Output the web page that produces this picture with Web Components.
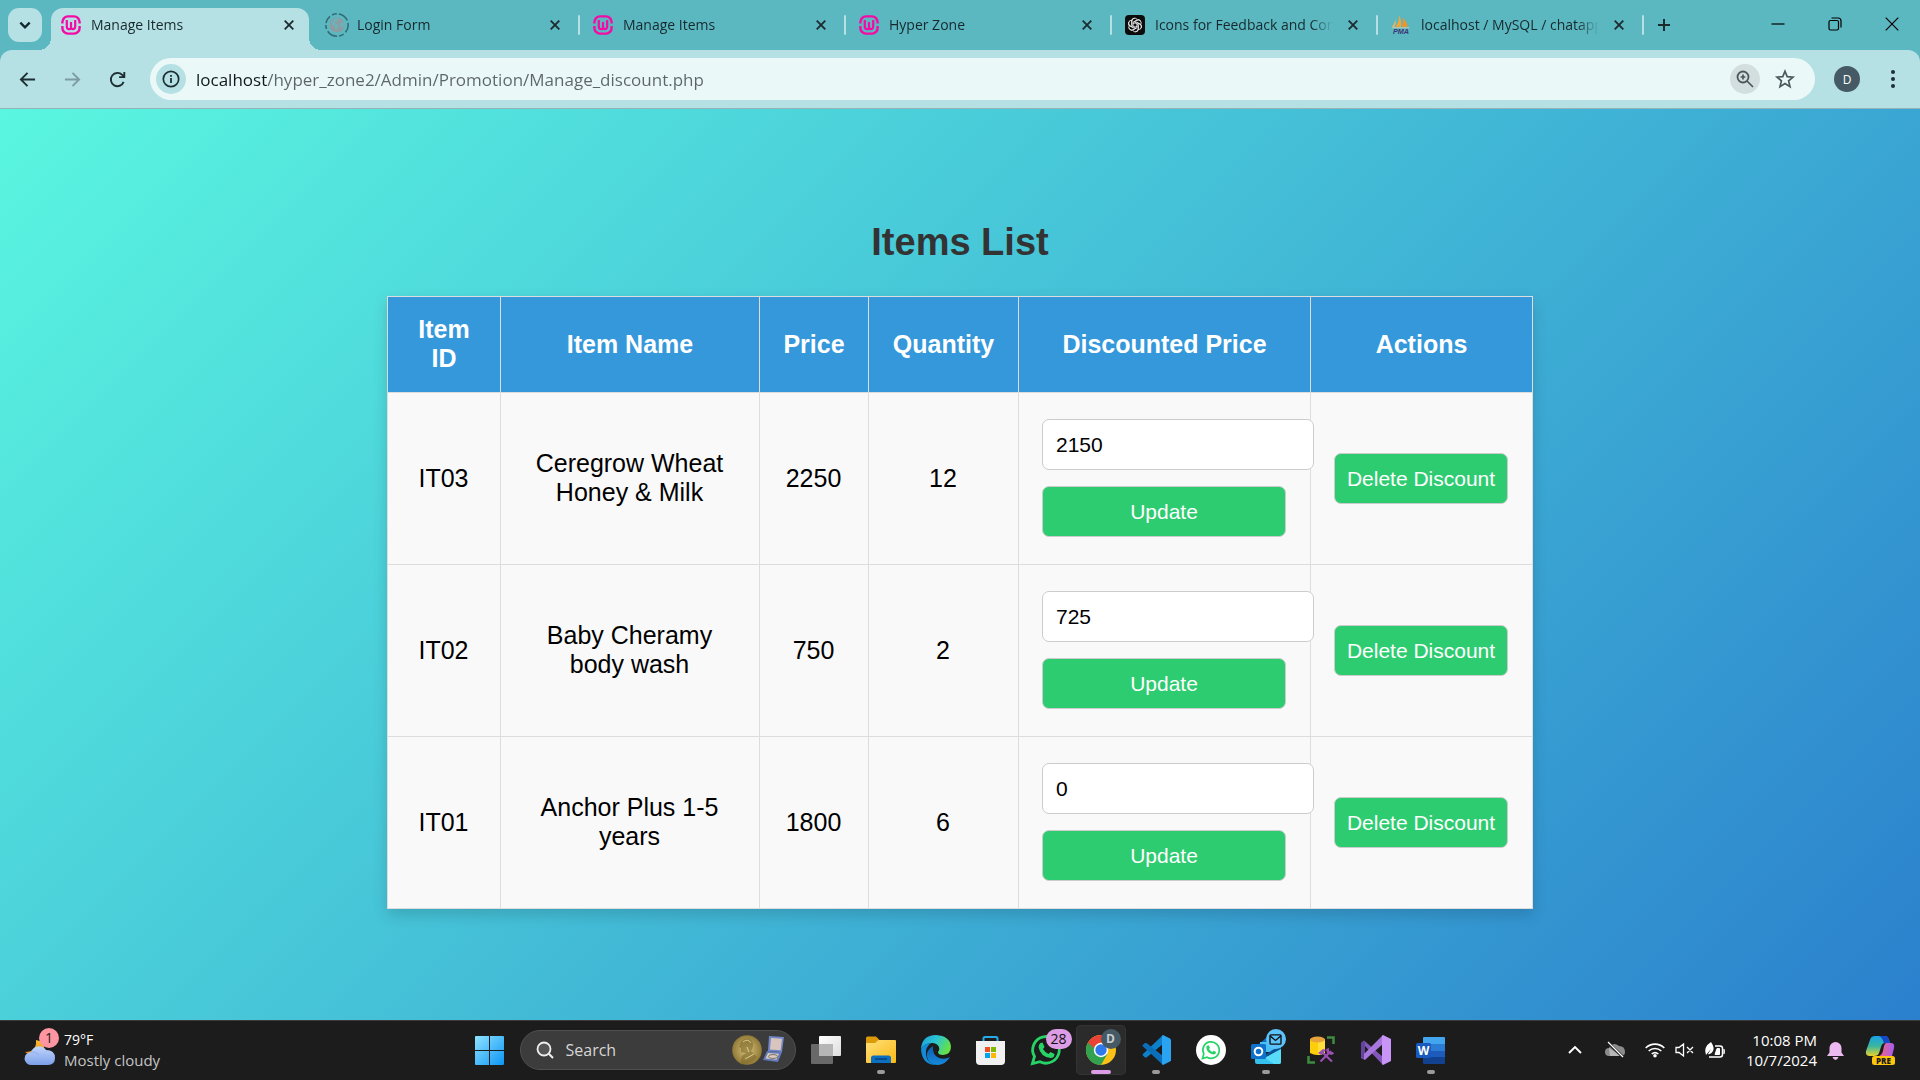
<!DOCTYPE html>
<html lang="en">
<head>
<meta charset="utf-8">
<title>Manage Items</title>
<style>
  body { margin: 0; min-height: 100vh; display: flex; flex-direction: column; font-family: "Open Sans", "Segoe UI", sans-serif; font-size: 14px; }
  manage-page { flex: 1; }
</style>
</head>
<body>
<browser-chrome></browser-chrome>
<manage-page></manage-page>
<task-bar></task-bar>

<script>
const ICONS = {
  wamp: ['0 0 20 20', `<g fill="none" stroke="#f50aa5" stroke-width="2.4"><path d="M1.4 8.6V7a5.6 5.6 0 0 1 5.6-5.6h6A5.6 5.6 0 0 1 18.600 7v1.600M1.400 11v2A5.600 5.600 0 0 0 7 18.600h6a5.600 5.600 0 0 0 5.600-5.600v-2"/><path d="M5.800 5v6.500q0 2.700 2.200 2.700t2-2.200V7v5q0 2.200 2 2.200t2.200-2.700V5" stroke-width="2.200"/></g>`],
  globe: ['0 0 24 24', `<circle cx="12" cy="12" r="11.200" fill="none" stroke="#346c76" stroke-width="1.600" stroke-dasharray="8 2.400 5 2 11 2.500 4 2"/><circle cx="12" cy="12" r="7.600" fill="#8b9da3"/><path d="M7 8q3-4 7-2l-1 2-3 1 1 2 3 1-1 3-2 2-2-4-3-2zM16 9l3 1v3l-2 2-2-3z" fill="#6fafb8"/>`],
  openai: ['0 0 20 20', `<rect width="20" height="20" rx="4" fill="#0c0c0d"/><g fill="none" stroke="#e8e8e8" stroke-width=".9">${[0,60,120,180,240,300].map(a=>`<path transform="rotate(${a} 10 10)" d="M6.800 9.800V6a2.900 2.900 0 0 1 5.400-1.400M8 11V7.400l3.600-2.100a2.900 2.900 0 0 1 4 1"/>`).join('')}</g>`],
  pma: ['0 0 22 22', `<path d="M9 0q3 7 2 13H5Q9 8 9 0z" fill="#f9a533"/><path d="M13 3q5 5 5 10h-6q2-5 1-10z" fill="#f79420"/><path d="M5 5q1 4-1 8H1q3-3 4-8z" fill="#fbb652"/><path d="M1 14h19" stroke="#d9c9a4" stroke-width="1"/><text x="11" y="21" text-anchor="middle" font-family="Liberation Sans" font-weight="700" font-style="italic" font-size="8" fill="#3b3678">PMA</text>`],
  close: ['0 0 12 12', `<path d="M1.700 1.700l8.600 8.600M10.300 1.700L1.700 10.300" stroke="#1c2a2e" stroke-width="1.800"/>`],
  plus: ['0 0 14 14', `<path d="M7 1v12M1 7h12" stroke="#1c2a2e" stroke-width="2"/>`],
  down: ['0 0 12 12', `<path d="M2 4l4 4 4-4" fill="none" stroke="#14292d" stroke-width="2"/>`],
  min: ['0 0 14 14', `<path d="M.5 7h13" stroke="#000" stroke-width="1.200"/>`],
  restore: ['0 0 14 14', `<rect x="1" y="3.500" width="9.500" height="9.500" rx="1.500" fill="none" stroke="#000" stroke-width="1.200"/><path d="M3.500 1h6.500a3 3 0 0 1 3 3v6.500" fill="none" stroke="#000" stroke-width="1.200"/>`],
  winclose: ['0 0 14 14', `<path d="M.7.7l12.600 12.600M13.300.7L.7 13.300" stroke="#000" stroke-width="1.200"/>`],
  back: ['0 0 18 18', `<path d="M17 9H2.500M9 2L2 9l7 7" fill="none" stroke="#1d2f33" stroke-width="2"/>`],
  forward: ['0 0 18 18', `<path d="M1 9h14.500M9 2l7 7-7 7" fill="none" stroke="#7d9ba0" stroke-width="2"/>`],
  reload: ['0 0 18 18', `<path d="M15.500 11.500A7 7 0 1 1 14 4.200L16 6.200M16.200 1v5.500h-5.500" fill="none" stroke="#1d2f33" stroke-width="2"/>`],
  info: ['0 0 18 18', `<circle cx="9" cy="9" r="7.700" fill="none" stroke="#1d2f33" stroke-width="1.700"/><path d="M9 8v5M9 5v1.800" stroke="#1d2f33" stroke-width="1.800"/>`],
  zoom: ['0 0 18 18', `<circle cx="7" cy="7" r="5.500" fill="none" stroke="#4b585b" stroke-width="1.800"/><path d="M11 11l6 6M7 4.600v4.800M4.600 7h4.800" stroke="#4b585b" stroke-width="1.700"/>`],
  star: ['0 0 20 20', `<path d="M10 2.200l2.200 5.400 5.800.5-4.400 3.800 1.400 5.700-5-3.100-5 3.100 1.400-5.700L2 8.100l5.800-.5z" fill="none" stroke="#4b585b" stroke-width="1.700"/>`],
  dots: ['0 0 4 18', `<g fill="#1d2f33"><circle cx="2" cy="2" r="2"/><circle cx="2" cy="9" r="2"/><circle cx="2" cy="16" r="2"/></g>`],
  weather: ['0 0 30 32', `<defs><linearGradient id="m" x2="0" y2="1"><stop stop-color="#f9c12e"/><stop offset="1" stop-color="#ee7b1c"/></linearGradient><linearGradient id="c" x2="0" y2="1"><stop stop-color="#c2d6fb"/><stop offset="1" stop-color="#7ba0ea"/></linearGradient></defs><path d="M11 6Q22 8 18 18q-6 7-15 2l-3-2q12 0 11-12z" fill="url(#m)"/><path d="M7 31a7 6.500 0 0 1-1-13 8.500 8.500 0 0 1 15-2q9 0 9 8 0 7-7 7z" fill="url(#c)"/><path d="M6 18q5-1 8 3" stroke="#7ba0ea" fill="none" opacity=".6"/>`],
  start: ['0 0 29 29', `<defs><linearGradient id="w" gradientUnits="userSpaceOnUse" x1="0" y1="0" x2="29" y2="29"><stop stop-color="#8fe3ff"/><stop offset="1" stop-color="#0c95f5"/></linearGradient></defs><path fill="url(#w)" d="M1 0h13v14H0V1a1 1 0 0 1 1-1zM15 0h13a1 1 0 0 1 1 1v13H15zM0 15h14v14H1a1 1 0 0 1-1-1zM15 15h14v13a1 1 0 0 1-1 1H15z"/>`],
  search: ['0 0 18 18', `<circle cx="8" cy="8" r="6.500" fill="#555" stroke="#eee" stroke-width="1.800"/><path d="M12.800 12.800l4.200 4.200" stroke="#eee" stroke-width="2"/>`],
  medal: ['0 0 52 30', `<defs><radialGradient id="g"><stop stop-color="#d9c37c"/><stop offset="1" stop-color="#917a37"/></radialGradient></defs><circle cx="15" cy="15" r="14.800" fill="url(#g)"/><path d="M8 29l2-8 4-3-5-1 0-4-2-1 2-5q5-6 10-2 4 5 0 11l6 6-5 5q-6 3-12 2z" fill="#816a2e" opacity=".6"/><path d="M11 7q5-4 8 1M15 12l2 5M13 24l9-5" stroke="#e0cc88" fill="none"/><path d="M37 1l15 1-2 15-14-1z" fill="#7187c8"/><path d="M39 3l11 .7-1.400 11.500-10.600-.8z" fill="#d9c5bd"/><path d="M35 16l15 1-4 10-15-2z" fill="#6279be"/><path d="M36 18l11 .8-2.500 6-11-1.200z" fill="#d6c9bd"/><ellipse cx="41" cy="21.500" rx="4.500" ry="2" fill="none" stroke="#7d7468"/>`],
  taskview: ['0 0 30 28', `<defs><linearGradient id="t" x2="1" y2="1"><stop stop-color="#fff"/><stop offset="1" stop-color="#ddd"/></linearGradient></defs><rect x="8" width="22" height="20" rx="1" fill="url(#t)"/><rect y="8" width="22" height="20" rx="1" fill="#777" opacity=".85"/><path d="M8 8h14v12H8z" fill="#b6b6b6"/>`],
  explorer: ['0 0 30 28', `<defs><linearGradient id="e" x2="1" y2="1"><stop stop-color="#ffe07a"/><stop offset="1" stop-color="#fbb915"/></linearGradient></defs><path d="M0 2a1.500 1.500 0 0 1 1.500-1.500H10L13.500 4v4H0z" fill="#dd9a08"/><path d="M0 7h9l3.500-3H29a1 1 0 0 1 1 1v21a1 1 0 0 1-1 1H1a1 1 0 0 1-1-1z" fill="url(#e)"/><path d="M5 27v-5a2.500 2.500 0 0 1 2.500-2.500h15A2.500 2.500 0 0 1 25 22v5z" fill="#0d6fc0"/><path d="M9 23h12" stroke="#05427c" stroke-width="1.500"/>`],
  edge: ['0 0 30 30', `<defs><linearGradient id="a" x2="1" y2=".4"><stop stop-color="#1c9fe0"/><stop offset=".55" stop-color="#2dc6cf"/><stop offset="1" stop-color="#63e04a"/></linearGradient><linearGradient id="b" x2="0" y2="1"><stop stop-color="#0d5cab"/><stop offset="1" stop-color="#168ade"/></linearGradient></defs><path d="M0 14Q1 0 15 0q14 1 15 11.500 0 8-8 8.500-5 0-5-3 2-2 1-5-2-4-7-4Q3 8 0 14z" fill="url(#a)"/><path d="M0 14q3-6 10-6-6 4-5 12 1 8 10 10Q1 30 0 14z" fill="#128bd8"/><path d="M12 11q-7 4-6 11 2 8 11 8 8-1 12-8-5 3-11 1-7-3-6-12z" fill="url(#b)"/>`],
  store: ['0 0 29 29', `<path d="M7.500 6V2.500A1.500 1.500 0 0 1 9 1h11a1.500 1.500 0 0 1 1.500 1.500V6" fill="none" stroke="#28a9e8" stroke-width="2"/><path d="M0 5h29v20a4 4 0 0 1-4 4H4a4 4 0 0 1-4-4z" fill="#f1f1f1"/><path d="M9 11h5v5H9z" fill="#f04e23"/><path d="M15 11h5v5h-5z" fill="#7fb900"/><path d="M9 17h5v5H9z" fill="#00a3ee"/><path d="M15 17h5v5h-5z" fill="#fdb801"/>`],
  whatsapp: ['0 0 30 30', `<path d="M1.500 28.500l2-7A13.300 13.300 0 1 1 9 26.700z" fill="none" stroke="#27d366" stroke-width="2.800"/><path d="M9.500 8l2-.5 2 4.500-1.500 2q2 3.500 5.500 5l2-2 4 2q0 4-4 4-10-1-12-11 .5-3 2-4z" fill="#27d366"/>`],
  chrome: ['0 0 30 30', `<circle cx="15" cy="15" r="15" fill="#fbc116"/><path d="M2 7.500A15 15 0 0 0 15 30l6.500-11.200L15 15z" fill="#31a350"/><path d="M2 7.500A15 15 0 0 1 28 7.500H15L8.500 11.300 7 16z" fill="#ea4335"/><path d="M2 7.500l6.500 11.300L9 14z" fill="#31a350"/><circle cx="15" cy="15" r="7.200" fill="#fff"/><circle cx="15" cy="15" r="5.700" fill="#3079ec"/>`],
  vscode: ['0 0 30 30', `<path d="M22 0L2 19a1 1 0 0 0 0 1.600l2 1.800 1.500.1L22 9z" fill="#0d80cc"/><path d="M22 30L2 11.500a1 1 0 0 1 0-1.700L4 8l1.500-.1L22 21z" fill="#0a6fb8"/><path d="M22 0l7 3.400 1 1.400v20.400l-1 1.400L22 30l-1-1V1z" fill="#2aa4f0"/>`],
  wawhite: ['0 0 30 30', `<circle cx="15" cy="15" r="15" fill="#fff"/><path d="M6.500 23.500l1.300-4.600A8.200 8.200 0 1 1 11 22.200z" fill="none" stroke="#27d366" stroke-width="1.700"/><path d="M11.500 10.500l1.200-.3 1.300 2.600-1 1.200q1.200 2.200 3.400 3l1.200-1.300 2.500 1.200q0 2.400-2.500 2.500-6-.6-7.300-6.500.2-1.900 1.200-2.400z" fill="#27d366"/>`],
  outlook: ['0 0 30 28', `<path d="M4 12L17 0l13 12v4H4z" fill="#126fc0"/><path d="M9 6h17v10H9z" fill="#49c0f5"/><path d="M4 12l13 8 13-8v14a2 2 0 0 1-2 2H6a2 2 0 0 1-2-2z" fill="#35c0ee"/><path d="M30 12L14 22l9 6h5a2 2 0 0 0 2-2z" fill="#58dcf8"/><path d="M15 18L30 9v4l-15 8z" fill="#0d5292"/><rect y="8" width="15" height="15" rx="1.500" fill="#0f72ca"/><circle cx="7.500" cy="15.500" r="3.800" fill="none" stroke="#fff" stroke-width="2"/>`],
  ssms: ['0 0 28 28', `<path d="M20 1.500h6.500V8M1.500 20v6.500H8" fill="none" stroke="#3c8b41" stroke-width="2.600"/><path d="M3 3v14q7 4 15 0V3z" fill="#fdcf0b"/><path d="M11 3v16q4 0 7-2V3z" fill="#ffdf3c"/><ellipse cx="10.500" cy="3.500" rx="7.500" ry="3" fill="#e8a33d"/><path d="M13.500 25.500L24 15M15 16l10 9.500" stroke="#9b4fb5" stroke-width="2.200"/><path d="M11 17l5-4 3 1-5 5zM22 12l0 4 4 0 1 2-3 1-4-2-1-4z" fill="#9b4fb5"/>`],
  vs: ['0 0 30 30', `<path d="M0 8l3-2.500L22 22v8L3 10v10l4-4 3 3-6 6-4-2z" fill="#8357ba"/><path d="M0 8l4-2v18l-4-2z" fill="#65459b"/><path d="M22 0L7 15l-4 4v5l1 .5L22 9z" fill="#a877dd"/><path d="M22 0l8 4v22l-8 4-1-1V1z" fill="#c894f6"/>`],
  word: ['0 0 29 27', `<path d="M7 1a1 1 0 0 1 1-1h20a1 1 0 0 1 1 1v6H7z" fill="#42a5ee"/><path d="M7 7h22v7H7z" fill="#2a7cd4"/><path d="M7 14h22v6H7z" fill="#1d5cbc"/><path d="M7 20h22v6a1 1 0 0 1-1 1H8a1 1 0 0 1-1-1z" fill="#11418f"/><rect y="6" width="15" height="15" rx="1.500" fill="#185abd"/><text x="7.500" y="18" text-anchor="middle" font-family="Open Sans" font-weight="700" font-size="12" fill="#fff">W</text>`],
  mail: ['0 0 14 12', `<rect x="1" y="1" width="12" height="10" rx="1" fill="none" stroke="#111" stroke-width="1.500"/><path d="M1 2l6 5 6-5" fill="none" stroke="#111" stroke-width="1.500"/>`],
  up: ['0 0 14 8', `<path d="M1 7l6-6 6 6" fill="none" stroke="#fff" stroke-width="1.900"/>`],
  cloudoff: ['0 0 20 16', `<path d="M4 14a4 4 0 0 1 0-8 6 6 0 0 1 10-2q6 0 6 6 0 4-4 4z" fill="#8b8b8b"/><path d="M4 6l12 8h-11z" fill="#b7b7b7"/><path d="M3 1l15 14" stroke="#1c1c1c" stroke-width="3"/><path d="M3 0l15 15" stroke="#fff" stroke-width="1.300"/>`],
  wifi: ['0 0 20 16', `<g fill="none" stroke="#fff" stroke-width="1.600"><path d="M.7 6a13 13 0 0 1 18.600 0M3.700 9a9 9 0 0 1 12.600 0M6.700 12a5 5 0 0 1 6.600 0"/></g><circle cx="10" cy="13.700" r="1.800" fill="#fff"/>`],
  mute: ['0 0 20 14', `<path d="M1 4.500h3L8.500 1v12L4 9.500H1zM12 4l6 6M18 4l-6 6" fill="none" stroke="#fff" stroke-width="1.300"/>`],
  battery: ['0 0 20 16', `<path d="M10 4h5a2.500 2.500 0 0 1 2.500 2.500v6A2.500 2.500 0 0 1 15 15H4" fill="none" stroke="#fff" stroke-width="1.500"/><path d="M18.500 7.500h.8v4h-.8M12 6.500h2.500v6h-4.500z" fill="#fff" stroke="#fff"/><path d="M1 13Q-2 5 6 0q4 6 2 9-2 4-5 3l3-5-5 6z" fill="#fff"/>`],
  bell: ['0 0 17 20', `<path d="M2.500 8a6 6 0 0 1 12 0v4.500L17 16H0l2.500-3.500zM5.500 17h6q-1 3-3 3t-3-3z" fill="#edb9f2"/>`],
  copilot: ['0 0 30 29', `<defs><linearGradient id="p" x2="0" y2="1"><stop stop-color="#18a3e8"/><stop offset=".5" stop-color="#39b6a0"/><stop offset="1" stop-color="#e8d22b"/></linearGradient><linearGradient id="q" x2="1" y2="0"><stop stop-color="#f5667b"/><stop offset="1" stop-color="#a55cf0"/></linearGradient></defs><path d="M9 0h10q3 0 4 4l1 3h-5q-3 0-4 4l-2 6q-1 3-5 3H4q-5 0-4-5L4 4q1-4 5-4z" fill="url(#p)"/><path d="M13 0h6q3 0 4 4l1 3h-6q-2-6-5-7z" fill="#1747c9"/><path d="M20 7h5q4 0 3 5l-2 8H13q3-1 4-5l1-5q1-3 2-3z" fill="url(#q)"/><rect x="6" y="20" width="23" height="9" rx="2.500" fill="#fdc50b"/><text x="17.500" y="27.500" text-anchor="middle" font-family="Open Sans" font-weight="800" font-size="8" fill="#1c1c1c">PRE</text>`]
};

function define(name, render) {
  customElements.define(name, class extends HTMLElement {
    connectedCallback() {
      if (this.shadowRoot) return;
      this.attachShadow({ mode: 'open' }).innerHTML = render(this);
    }
  });
}
const icon = (name, w, h = w) => `<svg-icon name="${name}" style="width:${w}px;height:${h}px"></svg-icon>`;

define('svg-icon', el => {
  const [box, body] = ICONS[el.getAttribute('name')];
  return `<style>:host{display:inline-block;flex:none}svg{display:block;width:100%;height:100%;overflow:visible}</style>
    <svg viewBox="${box}" aria-hidden="true">${body}</svg>`;
});

const BUTTON_RESET = `button{font:inherit;color:inherit;background:none;border:0;padding:0;margin:0;display:flex;align-items:center;justify-content:center}`;

define('browser-tab', el => `<style>${BUTTON_RESET}
  :host{display:flex;flex:0 1 266px;min-width:0;box-sizing:border-box;align-items:stretch;position:relative;color:#17292d}
  .shape{flex:1;min-width:0;display:flex;align-items:center;gap:10px;margin:8px 4px 0;padding:0 10px 8px}
  :host([active]) .shape{background:#b5e0e4;border-radius:12px 12px 0 0;position:relative}
  :host([active]) .shape::before,:host([active]) .shape::after{content:"";position:absolute;bottom:0;width:12px;height:12px}
  :host([active]) .shape::before{left:-12px;background:radial-gradient(circle at 0 0,transparent 12px,#b5e0e4 12px)}
  :host([active]) .shape::after{right:-12px;background:radial-gradient(circle at 100% 0,transparent 12px,#b5e0e4 12px)}
  .title{flex:1;min-width:0;display:block;text-align:left;white-space:nowrap;overflow:hidden;line-height:22px;mask-image:linear-gradient(to right,#000 calc(100% - 22px),transparent)}
  .fav{width:20px;display:flex;justify-content:center;flex:none}
  .x{width:20px;height:20px;flex:none}
  :host([divided])::after{content:"";position:absolute;right:-1px;top:15px;width:2px;height:20px;background:#b5e0e4;border-radius:1px}
  </style>
  <div class="shape"><span class="fav">${icon(el.getAttribute('icon'), +el.getAttribute('size') || 20)}</span>
  <button class="title" role="tab"><slot></slot></button>
  <button class="x" aria-label="Close tab">${icon('close', 12)}</button></div>`);

define('browser-chrome', () => `<style>${BUTTON_RESET}
  :host{display:block;background:#5bb8c1}
  .strip{display:flex;height:50px}
  .menu{width:34px;height:34px;margin:8px 5px 0 8px;border-radius:11px;background:#b5e0e4;flex:none}
  .tabs{display:flex;flex:0 1 1596px;min-width:0}
  .new{width:42px;flex:none}
  .win{display:flex;margin-left:auto}.win button{width:57px;height:48px}
  .bar{display:flex;align-items:center;height:58px;background:#b5e0e4;border-radius:12px 12px 0 0;border-bottom:1px solid #93b3b6;padding:0 8px 0 5px}
  .nav{width:45px;height:42px}
  .url{flex:1;min-width:0;display:flex;align-items:center;height:42px;border-radius:21px;background:#ebf8f8;margin-left:10px;padding:0 20px 0 6px;gap:10px}
  .round{width:30px;height:30px;border-radius:50%;background:#b5e0e4;flex:none}
  .round.grey{background:#d3dfdf}
  .star{margin-left:5px}
  input{flex:1;min-width:0;border:0;padding:0;margin:0;outline:0;font:17px/24px "Open Sans",sans-serif;height:26px;-webkit-text-fill-color:transparent;color:#5c6669;background:linear-gradient(to right,#10191b 71px,#5c6669 71px);-webkit-background-clip:text;background-clip:text}
  .avatar{width:26px;height:26px;border-radius:50%;background:#455a64;color:#fff;font-size:12px;margin:0 14px 0 19px}
  .dots{width:38px;height:38px}
  </style>
  <div class="strip">
    <button class="menu" aria-label="Search tabs">${icon('down', 14)}</button>
    <div class="tabs" role="tablist">
      <browser-tab icon="wamp" active>Manage Items</browser-tab>
      <browser-tab icon="globe" size="24" divided>Login Form</browser-tab>
      <browser-tab icon="wamp" divided>Manage Items</browser-tab>
      <browser-tab icon="wamp" divided>Hyper Zone</browser-tab>
      <browser-tab icon="openai" divided>Icons for Feedback and Contact</browser-tab>
      <browser-tab icon="pma" divided>localhost / MySQL / chatapp</browser-tab>
    </div>
    <button class="new" aria-label="New tab">${icon('plus', 14)}</button>
    <div class="win"><button aria-label="Minimize">${icon('min', 14)}</button><button aria-label="Restore">${icon('restore', 14)}</button><button aria-label="Close">${icon('winclose', 14)}</button></div>
  </div>
  <div class="bar">
    <button class="nav" aria-label="Back">${icon('back', 17)}</button>
    <button class="nav" aria-label="Forward">${icon('forward', 17)}</button>
    <button class="nav" aria-label="Reload">${icon('reload', 17)}</button>
    <div class="url">
      <button class="round" aria-label="Site information">${icon('info', 18)}</button>
      <input type="text" aria-label="Address" value="localhost/hyper_zone2/Admin/Promotion/Manage_discount.php">
      <button class="round grey" aria-label="Zoom">${icon('zoom', 18)}</button>
      <button class="star" aria-label="Bookmark">${icon('star', 20)}</button>
    </div>
    <button class="avatar" aria-label="Profile">D</button>
    <button class="dots" aria-label="Menu">${icon('dots', 4, 18)}</button>
  </div>`);

const FIELD = `box-sizing:content-box;margin:0;border:1px solid #ccc;border-radius:7px;font:21px/25px "Liberation Sans",Arial,sans-serif`;

define('action-button', () => `<style>:host{display:block}
  button{${FIELD};box-sizing:border-box;display:block;width:100%;height:51px;padding:0;background:#2ecc71;color:#fff;white-space:nowrap}</style>
  <button type="button"><slot></slot></button>`);

define('discount-form', el => `<style>:host{display:block}
  form{display:flex;flex-direction:column;gap:16px;margin:0}
  input{${FIELD};width:100%;height:25px;padding:12px 13px;background:#fff;color:#000;position:relative;z-index:1}</style>
  <form><input type="number" aria-label="Discounted price" value="${el.getAttribute('value')}"><action-button>Update</action-button></form>`);

define('items-table', () => {
  const rows = [
    ['IT03', 'Ceregrow Wheat Honey &amp; Milk', 2250, 12, 2150],
    ['IT02', 'Baby Cheramy body wash', 750, 2, 725],
    ['IT01', 'Anchor Plus 1-5 years', 1800, 6, 0]
  ];
  return `<style>
  :host{display:block;width:90%;max-width:1146px}
  table{width:100%;table-layout:fixed;border-collapse:collapse;background:#f9f9f9;box-shadow:0 6px 14px rgba(0,0,0,.15);font-size:25px;line-height:29px;text-align:center;color:#000}
  th,td{border:1px solid #ddd;padding:26px 24px 27px 23px}
  th{background:#3498db;color:#fff;padding:18px 23px 19px}
  </style>
  <table>
    <colgroup>${[113, 259, 109, 150, 292, 222].map(w => `<col style="width:${w}px">`).join('')}</colgroup>
    <thead><tr><th>Item ID</th><th>Item Name</th><th>Price</th><th>Quantity</th><th>Discounted Price</th><th>Actions</th></tr></thead>
    <tbody>${rows.map(r => `<tr>${r.slice(0, 4).map(c => `<td>${c}</td>`).join('')}<td><discount-form value="${r[4]}"></discount-form></td><td><action-button>Delete Discount</action-button></td></tr>`).join('')}</tbody>
  </table>`;
});

define('manage-page', () => `<style>
  :host{display:flex;flex-direction:column;align-items:center;justify-content:center;background:linear-gradient(135deg,#5af6e0,#2b80cd);font-family:"Liberation Sans",Arial,sans-serif}
  h2{margin:0 0 32px;font-size:38px;line-height:44px;color:#333}
  </style><h2>Items List</h2><items-table></items-table>`);

define('task-button', el => `<style>${BUTTON_RESET}
  :host{display:block;width:50px;height:50px;flex:none;position:relative}
  button{width:100%;height:100%;border-radius:5px}
  :host([active]) button{background:#2b2b2b;box-shadow:inset 0 0 0 1px #333}
  :host([running])::after{content:"";position:absolute;left:50%;bottom:1px;width:8px;height:4px;border-radius:2px;background:#9a9a9a;transform:translateX(-50%)}
  :host([active])::after{width:20px;background:#dc9de6}
  ::slotted(*){position:absolute;top:4px;right:5px;min-width:20px;height:20px;border-radius:10px;display:flex!important;align-items:center;justify-content:center;font-size:12px;line-height:20px}
  </style><button aria-label="${el.getAttribute('label')}">${icon(el.getAttribute('icon'), el.getAttribute('w') || 30, el.getAttribute('h') || 30)}</button><slot></slot>`);

define('task-bar', () => `<style>${BUTTON_RESET}
  :host{display:grid;grid-template-columns:1fr auto 1fr;height:60px;align-items:center;background:#1c1c1c;box-shadow:inset 0 1px #3a3a3a;color:#fff}
  .weather{justify-self:start;margin-left:25px;gap:9px;position:relative;text-align:left;line-height:20px}
  .weather small{font-size:15px;color:#c4c4c4;display:block}
  .badge{position:absolute;left:14px;top:-2px;width:20px;height:20px;border-radius:50%;background:#ff95a0;color:#222;text-align:center;font-size:14px;line-height:20px}
  .apps{display:flex;gap:5px;align-items:center}
  .search{width:276px;height:40px;box-sizing:border-box;border:1px solid #505050;border-radius:20px;background:#3c3c3c;display:flex;align-items:center;gap:12px;padding:0 11px 0 15px}
  input{flex:1;min-width:0;border:0;padding:0;background:none;color:#d6d6d6;font:16px/24px "Open Sans",sans-serif;outline:0}
  input::placeholder{color:#d6d6d6;opacity:1}
  .tray{justify-self:end;display:flex;align-items:center;padding-right:24px}
  .clock{display:block;text-align:right;line-height:20px;margin-left:16px;margin-right:10px;font-size:15px}
  .n28{background:#dc9de6;color:#111;width:26px;font-size:14px;right:-1px}
  .d{background:#455a64;color:#c5ccd0;font-weight:700}
  .m{background:#5cc3fa}
  </style>
  <button class="weather">${icon('weather', 30, 32)}<span class="badge">1</span><span>79°F<small>Mostly cloudy</small></span></button>
  <div class="apps">
    <task-button icon="start" w="29" h="29" label="Start"></task-button>
    <label class="search">${icon('search', 18)}<input type="search" aria-label="Search" placeholder="Search">${icon('medal', 52, 30)}</label>
    <task-button icon="taskview" w="30" h="28" label="Task view"></task-button>
    <task-button icon="explorer" w="30" h="28" label="File Explorer" running></task-button>
    <task-button icon="edge" label="Edge"></task-button>
    <task-button icon="store" w="29" h="29" label="Store"></task-button>
    <task-button icon="whatsapp" label="WhatsApp"><span class="n28">28</span></task-button>
    <task-button icon="chrome" label="Chrome" running active><span class="d">D</span></task-button>
    <task-button icon="vscode" label="Visual Studio Code" running></task-button>
    <task-button icon="wawhite" label="WhatsApp Web"></task-button>
    <task-button icon="outlook" w="30" h="28" label="Outlook" running><span class="m">${icon('mail', 13, 11)}</span></task-button>
    <task-button icon="ssms" w="28" h="28" label="Database tools"></task-button>
    <task-button icon="vs" label="Visual Studio"></task-button>
    <task-button icon="word" w="29" h="27" label="Word" running></task-button>
  </div>
  <div class="tray">
    <button style="width:30px" aria-label="Hidden icons">${icon('up', 14, 8)}</button>
    <button style="width:50px" aria-label="OneDrive">${icon('cloudoff', 20, 16)}</button>
    <button style="width:30px" aria-label="Network">${icon('wifi', 20, 16)}</button>
    <button style="width:30px" aria-label="Volume">${icon('mute', 20, 14)}</button>
    <button style="width:30px" aria-label="Battery">${icon('battery', 20, 16)}</button>
    <button class="clock">10:08 PM<br>10/7/2024</button>
    <button aria-label="Notifications">${icon('bell', 17, 20)}</button>
    <button style="margin-left:22px" aria-label="Copilot">${icon('copilot', 30, 29)}</button>
  </div>`);
</script>
</body>
</html>
